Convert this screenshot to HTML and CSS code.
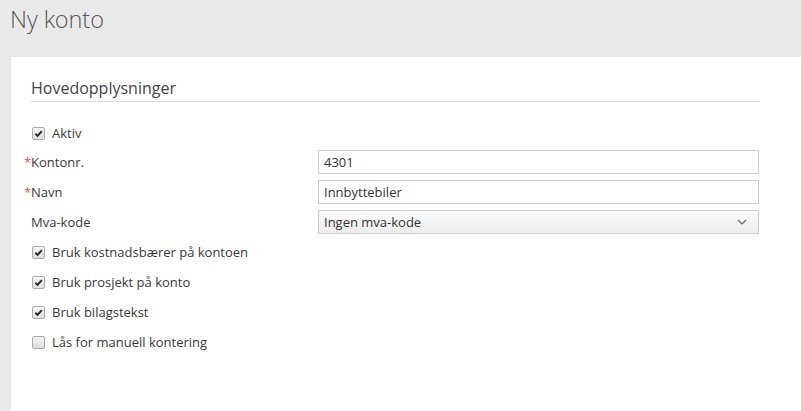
FILE: index.html
```html
<html>

<head>
    <title>Ny konto</title>
    <link rel="stylesheet" href="styles.css">
</head>

<body>
    <div class="pageHeader">
        <h1 class="pageTitle">Ny konto</h1>
    </div>
    <div class="panel">
        <div class="section">
            <div class="sectionTitle">Hovedopplysninger</div>

            <div class="checkRow aktivRow">
                <span class="box checked"><svg viewBox="0 0 12 12"><path d="M2.6 6.2 L5 8.6 L9.6 3.4" /></svg></span>
                <span>Aktiv</span>
            </div>

            <div class="fieldRow">
                <div class="label"><span class="req">*</span>Kontonr.</div>
                <div class="input">4301</div>
            </div>
            <div class="fieldRow">
                <div class="label"><span class="req">*</span>Navn</div>
                <div class="input">Innbyttebiler</div>
            </div>
            <div class="fieldRow">
                <div class="label">Mva-kode</div>
                <div class="input select">
                    <span>Ingen mva-kode</span>
                    <svg class="chevron" viewBox="0 0 10 6"><path d="M1 1 L5 5 L9 1" /></svg>
                </div>
            </div>

            <div class="checkRow">
                <span class="box checked"><svg viewBox="0 0 12 12"><path d="M2.6 6.2 L5 8.6 L9.6 3.4" /></svg></span>
                <span>Bruk kostnadsbærer på kontoen</span>
            </div>
            <div class="checkRow">
                <span class="box checked"><svg viewBox="0 0 12 12"><path d="M2.6 6.2 L5 8.6 L9.6 3.4" /></svg></span>
                <span>Bruk prosjekt på konto</span>
            </div>
            <div class="checkRow">
                <span class="box checked"><svg viewBox="0 0 12 12"><path d="M2.6 6.2 L5 8.6 L9.6 3.4" /></svg></span>
                <span>Bruk bilagstekst</span>
            </div>
            <div class="checkRow">
                <span class="box"></span>
                <span>Lås for manuell kontering</span>
            </div>
        </div>
    </div>
</body>

</html>
```

FILE: styles.css
```css
body {
    margin: 0;
    background-color: #e9e9e9;
    font-family: 'Open Sans', 'DejaVu Sans', sans-serif;
    color: #3a3a3a;
    font-size: 13px;
}

.pageHeader {
    height: 57px;
    padding: 0 10px;
    box-sizing: border-box;
}

.pageTitle {
    margin: 0;
    padding-top: 4px;
    font-family: 'Open Sans Light', 'Open Sans', sans-serif;
    font-size: 23.5px;
    font-weight: 300;
    line-height: 30px;
    color: #555;
}

.panel {
    margin-left: 11px;
    background-color: #fff;
    padding: 20px 42px 0 20px;
    height: 354px;
    box-sizing: border-box;
}

.sectionTitle {
    font-size: 16px;
    line-height: 22px;
    color: #444;
    padding-bottom: 2px;
    border-bottom: 1px solid #dcdcdc;
    margin-bottom: 20px;
}

.checkRow {
    display: flex;
    align-items: center;
    height: 24px;
    margin-bottom: 6px;
    padding-left: 1px;
}

.aktivRow {
    height: 22px;
}

.box {
    width: 11px;
    height: 11px;
    border: 1px solid #aaa;
    border-radius: 2px;
    background: linear-gradient(#f4f4f4, #dedede);
    margin-right: 7px;
    display: flex;
    align-items: center;
    justify-content: center;
}

.box svg {
    width: 11px;
    height: 11px;
}

.box path {
    fill: none;
    stroke: #2a2a2a;
    stroke-width: 2.2;
}

.fieldRow {
    display: grid;
    grid-template-columns: 287px 1fr;
    align-items: center;
    height: 24px;
    margin-bottom: 6px;
}

.label {
    position: relative;
}

.req {
    color: #d9534f;
    margin-left: -7px;
    display: inline-block;
    width: 7px;
}

.input {
    height: 24px;
    box-sizing: border-box;
    border: 1px solid #cfcfcf;
    padding: 0 5px;
    line-height: 22px;
    color: #333;
    background-color: #fff;
}

.select {
    display: flex;
    justify-content: space-between;
    align-items: center;
    background: linear-gradient(#fafafa, #ececec);
}

.chevron {
    width: 10px;
    height: 6px;
    margin-right: 6px;
}

.chevron path {
    fill: none;
    stroke: #666;
    stroke-width: 1.2;
}
```
